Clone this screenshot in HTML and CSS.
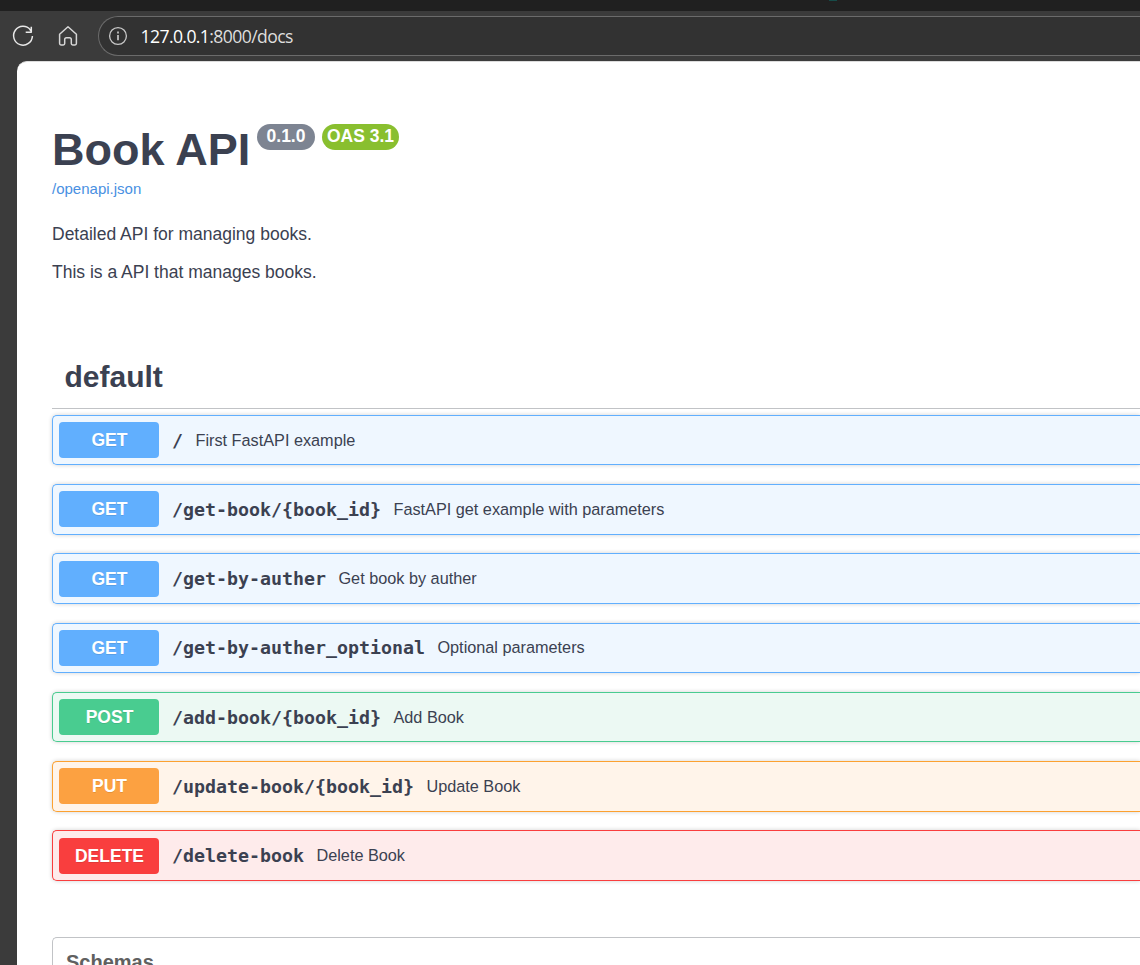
FILE: index.html
```html
<!DOCTYPE html>
<html lang="en">
<head>
<meta charset="utf-8">
<title>Book API - Swagger UI</title>
<link rel="stylesheet" href="styles.css">
</head>
<body>
<div class="tabstrip"><span class="tab-accent"></span></div>
<header class="toolbar">
  <svg class="icon" width="24" height="24" viewBox="0 0 24 24"><path d="M19.4 5.9A9.4 9.4 0 1 0 21.4 12M20.3 2.8v5.4h-5.6M20.3 7.4l-1.6-2"/></svg>
  <svg class="icon home" width="24" height="24" viewBox="0 0 24 24"><path d="M3.6 10.3 12 2.8l8.4 7.5v9.3q0 1.4-1.4 1.4h-2.3q-1.4 0-1.4-1.4v-4.1q0-1.8-1.8-1.8h-3q-1.8 0-1.8 1.8v4.1q0 1.4-1.4 1.4H5q-1.4 0-1.4-1.4z"/></svg>
  <div class="address">
    <svg class="icon info" width="20" height="20" viewBox="0 0 20 20"><circle cx="10" cy="10" r="8.4"/><path d="M10 9v5.2M10 5.6v1.8" stroke-width="1.7"/></svg>
    <span class="url"><span class="host">127.0.0.1</span>:8000/docs</span>
  </div>
</header>
<main class="page">
  <div class="heading">
    <h1 class="title">Book API</h1>
    <span class="badge version">0.1.0</span>
    <span class="badge oas">OAS 3.1</span>
  </div>
  <a class="spec-link">/openapi.json</a>
  <p class="description">Detailed API for managing books.</p>
  <p class="description">This is a API that manages books.</p>
  <h2 class="tag">default</h2>
  <section class="operations">
    <div class="op get"><span class="method">GET</span><span class="path">/</span><span class="summary">First FastAPI example</span></div>
    <div class="op get"><span class="method">GET</span><span class="path">/get-book/{book_id}</span><span class="summary">FastAPI get example with parameters</span></div>
    <div class="op get"><span class="method">GET</span><span class="path">/get-by-auther</span><span class="summary">Get book by auther</span></div>
    <div class="op get"><span class="method">GET</span><span class="path">/get-by-auther_optional</span><span class="summary">Optional parameters</span></div>
    <div class="op post"><span class="method">POST</span><span class="path">/add-book/{book_id}</span><span class="summary">Add Book</span></div>
    <div class="op put"><span class="method">PUT</span><span class="path">/update-book/{book_id}</span><span class="summary">Update Book</span></div>
    <div class="op delete"><span class="method">DELETE</span><span class="path">/delete-book</span><span class="summary">Delete Book</span></div>
  </section>
  <section class="schemas"><h3 class="schemas-title">Schemas</h3></section>
</main>
</body>
</html>
```

FILE: styles.css
```css
* { box-sizing: border-box; }
html, body { height: 100%; }
body {
  margin: 0;
  height: 965px;
  overflow: hidden;
  display: flex;
  flex-direction: column;
  background: #3b3b3b;
  color: #3b4151;
  font-family: "Liberation Sans", Arial, sans-serif;
}
h1, h2, h3, p { margin: 0; }

/* Browser frame */
.tabstrip { flex: none; height: 11px; background: #202020; }
.tab-accent { display: block; width: 8px; height: 1px; margin-left: 829px; background: #164b48; }
.toolbar { flex: none; height: 50px; padding: 5px 0 5px 11px; display: flex; align-items: center; }
.icon { flex: none; fill: none; stroke: #e8e8e8; stroke-width: 1.5; stroke-linejoin: round; }
.home { margin-left: 21px; stroke: #d6d6d6; }
.address {
  flex: 1;
  height: 40px;
  margin-left: 18px;
  padding-left: 9px;
  display: flex;
  align-items: center;
  border: 1px solid #6b6b6b;
  border-right: 0;
  border-radius: 20px 0 0 20px;
  background: #323232;
}
.info { stroke: #c8c8c8; stroke-width: 1.3; }
.url {
  margin-left: 12.5px;
  font: 17.6px/24px "Open Sans", "Noto Sans", sans-serif;
  letter-spacing: -.6px;
  color: #dedede;
  white-space: nowrap;
}
.host { color: #fff; }

/* Documentation page */
.page {
  flex: 1;
  min-height: 0;
  overflow: hidden;
  margin-left: 17px;
  padding: 62px 0 0 35px;
  border-top: 1px solid #dcdcdc;
  border-top-left-radius: 10px;
  background: #fff;
}
.heading { display: flex; align-items: flex-start; height: 55px; }
.title { width: 205px; font-size: 45px; line-height: 52px; white-space: nowrap; }
.badge {
  height: 26px;
  border-radius: 13px;
  color: #fff;
  font-size: 17.5px;
  font-weight: 700;
  line-height: 24px;
  text-align: center;
  white-space: nowrap;
}
.version { width: 58px; background: #7d8492; }
.oas { width: 77px; margin-left: 7px; background: #89bf2f; }
.spec-link { display: block; height: 20px; font-size: 15px; line-height: 20px; color: #4990e2; }
.description { font-size: 17.5px; line-height: 20px; margin-top: 18px; }
.spec-link + .description { margin-top: 25px; }
.tag {
  height: 64px;
  margin-top: 63px;
  padding-left: 12.5px;
  border-bottom: 1px solid #c1c3c6;
  font-size: 30px;
  line-height: 64px;
}
.operations { padding-top: 5.9px; }
.op {
  height: 50.5px;
  margin-bottom: 18.74px;
  padding-left: 6px;
  display: flex;
  align-items: center;
  border: 1px solid;
  border-right: 0;
  border-radius: 5px 0 0 5px;
  box-shadow: 0 0 4px rgba(0, 0, 0, .19);
}
.method {
  width: 100px;
  height: 36px;
  border-radius: 4px;
  color: #fff;
  font-size: 17.5px;
  font-weight: 700;
  line-height: 36px;
  padding-left: 1px;
  text-align: center;
  text-shadow: 0 1px 0 rgba(0, 0, 0, .1);
}
.path { margin-left: 13px; padding-top: 1px; font: 700 18.27px/24px "DejaVu Sans Mono", monospace; white-space: nowrap; }
.summary { margin-left: 12.5px; font-size: 16.25px; white-space: nowrap; }
.get { border-color: #61affe; background: #eff7ff; }
.get .method { background: #61affe; }
.post { border-color: #49cc90; background: #ecf9f3; }
.post .method { background: #49cc90; }
.put { border-color: #fca130; background: #fff4ea; }
.put .method { background: #fca141; }
.delete { border-color: #f93e3e; background: #feebeb; }
.delete .method { background: #f93e3e; }
.schemas {
  height: 80px;
  margin-top: 56.2px;
  padding: 12px 13px;
  border: 1px solid #c1c3c6;
  border-right: 0;
  border-radius: 5px 0 0 0;
}
.schemas-title { font-size: 20px; line-height: 24px; color: #606060; }
```
